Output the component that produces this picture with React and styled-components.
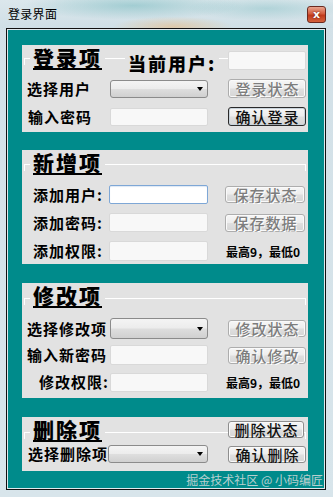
import React from "react";
import styled, { createGlobalStyle } from "styled-components";

const PANEL_BG = "#e2e2e2";
const TEAL = "#008b8b";

const Global = createGlobalStyle`
  html, body { margin: 0; padding: 0; }
  body {
    width: 333px; height: 497px; overflow: hidden;
    background: #d3e1e8;
    font-family: "Noto Sans CJK SC", "Noto Sans", sans-serif;
  }
  * { box-sizing: border-box; }
`;

const Window = styled.div`
  width: 333px;
  height: 497px;
  display: flex;
  flex-direction: column;
  background: linear-gradient(180deg, #d2e0e7 0%, #d8e5eb 100%);
`;

const TitleBar = styled.div`
  height: 28px;
  flex: none;
  display: flex;
  align-items: flex-start;
  justify-content: space-between;
  padding: 6px 7px 0 8px;
  background:
    radial-gradient(ellipse 60px 10px at 52% 95%, rgba(240, 175, 100, 0.45), rgba(240, 175, 100, 0) 100%),
    radial-gradient(ellipse 110px 14px at 40% 20%, rgba(60, 160, 165, 0.35), rgba(60, 160, 165, 0) 100%),
    radial-gradient(ellipse 80px 12px at 80% 30%, rgba(60, 160, 165, 0.25), rgba(60, 160, 165, 0) 100%),
    linear-gradient(180deg, #dce7ec 0%, #cfdfe6 100%);
`;

const TitleText = styled.span`
  font-size: 12px;
  line-height: 16px;
  letter-spacing: 0.3px;
  color: #000;
`;

const CloseBtn = styled.div`
  width: 19px;
  height: 17px;
  border-radius: 3px;
  border: 1px solid #6b2a20;
  background: linear-gradient(180deg, #e9a58f 0%, #d35c3d 45%, #c03a1c 55%, #d4623c 100%);
  display: flex;
  align-items: center;
  justify-content: center;
  color: #fff;
  font-family: "DejaVu Sans", sans-serif;
  font-weight: bold;
  font-size: 11px;
  line-height: 1;
  text-shadow: 0 0 2px #5a1a10;
`;

const Body = styled.div`
  flex: 1;
  margin: 0 7px 7px 6px;
  border: 1px solid #111;
  box-shadow: inset 0 0 0 1px #dfe9ed;
  background: ${TEAL};
  padding: 16px 17px 0 15px;
  display: flex;
  flex-direction: column;
`;

const Panel = styled.div`
  background: ${PANEL_BG};
  display: flex;
  flex-direction: column;
  gap: ${(p) => p.$gap}px;
  margin-top: ${(p) => p.$mt || 0}px;
  padding-bottom: ${(p) => p.$pb}px;
`;

const Header = styled.div`
  position: relative;
  height: 28px;
  flex: none;
  display: flex;
  align-items: flex-start;
  padding: 0 2px 0 11px;
  margin-bottom: ${(p) => p.$mb - p.$gap}px;
  &::before {
    content: "";
    position: absolute;
    left: 2px;
    right: 2px;
    top: ${(p) => p.$line}px;
    height: 6px;
    border: 1px solid #fff;
    border-bottom: none;
  }
`;

const Heading = styled.span`
  position: relative;
  z-index: 1;
  margin-top: 1px;
  font-size: 21px;
  font-weight: 900;
  line-height: 22px;
  letter-spacing: 2px;
  color: #000;
  border-bottom: 2px solid #000;
  background: ${PANEL_BG};
  box-shadow: -3px 0 0 ${PANEL_BG}, 3px 0 0 ${PANEL_BG};
`;

const SubTitle = styled.span`
  position: relative;
  z-index: 1;
  margin: 7px 0 0 26px;
  font-size: 18px;
  font-weight: 900;
  line-height: 22px;
  letter-spacing: 2px;
  color: #000;
  background: ${PANEL_BG};
  box-shadow: -3px 0 0 ${PANEL_BG}, 3px 0 0 ${PANEL_BG};
`;

const HeaderSlot = styled.div`
  position: relative;
  z-index: 1;
  margin-left: auto;
  margin-top: ${(p) => p.$top}px;
  width: 78px;
  display: flex;
`;

const Row = styled.div`
  display: grid;
  grid-template-columns: ${(p) => p.$label}px ${(p) => p.$input}px 1fr;
  align-items: center;
  height: ${(p) => p.$h}px;
`;

const Label = styled.span`
  padding-left: ${(p) => p.$pl}px;
  font-size: 15px;
  font-weight: 600;
  letter-spacing: 1px;
  line-height: 18px;
  white-space: nowrap;
  color: #000;
`;

const TextBox = styled.div`
  height: ${(p) => p.$h || 19}px;
  border-radius: 2px;
  border: 1px solid ${(p) => (p.$focus ? "#7ea7d6" : "#d9d9d9")};
  background: ${(p) => (p.$focus ? "#fff" : "#f8f8f8")};
  box-shadow: ${(p) => (p.$focus ? "inset 0 1px 1px rgba(120,160,210,0.25)" : "none")};
`;

const Combo = styled.div`
  height: ${(p) => p.$h || 18}px;
  border-radius: 3px;
  border: 1px solid #8b8b8b;
  background: linear-gradient(180deg, #f4f4f4 0%, #ececec 48%, #dedede 52%, #d0d0d0 100%);
  display: flex;
  align-items: center;
  justify-content: flex-end;
  padding-right: 4px;
`;

const Arrow = styled.span`
  width: 0;
  height: 0;
  border-left: 3px solid transparent;
  border-right: 3px solid transparent;
  border-top: 4px solid #000;
`;

const Button = styled.div`
  justify-self: end;
  height: ${(p) => p.$h || 17}px;
  width: ${(p) => p.$w || 78}px;
  margin-right: ${(p) => p.$mr ?? 2}px;
  border-radius: 3px;
  border: 1px solid ${(p) => (p.$default ? "#2a2a2a" : p.$disabled ? "#adadad" : "#8e8e8e")};
  box-shadow: ${(p) => (p.$default ? "inset 0 0 0 1px #c8d2da" : "inset 0 0 0 1px #fafafa")};
  background: linear-gradient(180deg, #f6f6f6 0%, #ededed 48%, #dfdfdf 52%, #d6d6d6 100%);
  display: flex;
  align-items: center;
  justify-content: center;
  font-size: 15px;
  font-weight: 500;
  letter-spacing: 1px;
  padding-left: 1px;
  line-height: 1;
  white-space: nowrap;
  color: ${(p) => (p.$disabled ? "#7d7d7d" : "#111")};
  text-shadow: ${(p) => (p.$disabled ? "1px 1px 0 #fff" : "none")};
`;

const Hint = styled.span`
  justify-self: start;
  margin-left: ${(p) => p.$ml || 0}px;
  font-size: 12px;
  font-weight: 700;
  white-space: nowrap;
  color: #000;
`;

const Footer = styled.div`
  height: 17px;
  margin-right: -15px;
  display: flex;
  align-items: center;
  justify-content: flex-end;
  font-size: 12px;
  color: #b7cfcf;
  white-space: nowrap;
`;

export default function App() {
  return (
    <>
      <Global />
      <Window>
        <TitleBar>
          <TitleText>登录界面</TitleText>
          <CloseBtn>x</CloseBtn>
        </TitleBar>
        <Body>
          <Panel $gap={9} $pb={6}>
            <Header $line={13} $mb={6} $gap={9}>
              <Heading>登录项</Heading>
              <SubTitle>当前用户:</SubTitle>
              <HeaderSlot $top={6}>
                <TextBox style={{ width: "100%" }} />
              </HeaderSlot>
            </Header>
            <Row $label={88} $input={98} $h={19}>
              <Label $pl={5}>选择用户</Label>
              <Combo><Arrow /></Combo>
              <Button $disabled $h={19}>登录状态</Button>
            </Row>
            <Row $label={88} $input={98} $h={19}>
              <Label $pl={6}>输入密码</Label>
              <TextBox $h={18} />
              <Button $default $h={19}>确认登录</Button>
            </Row>
          </Panel>

          <Panel $gap={9} $pb={4} $mt={18}>
            <Header $line={14} $mb={7} $gap={9}>
              <Heading>新增项</Heading>
            </Header>
            <Row $label={87} $input={99} $h={19}>
              <Label $pl={11}>添加用户:</Label>
              <TextBox $focus />
              <Button $disabled $w={80} $mr={3}>保存状态</Button>
            </Row>
            <Row $label={87} $input={99} $h={19}>
              <Label $pl={11}>添加密码:</Label>
              <TextBox />
              <Button $disabled $w={80} $mr={3} $h={18}>保存数据</Button>
            </Row>
            <Row $label={87} $input={99} $h={19}>
              <Label $pl={11}>添加权限:</Label>
              <TextBox $h={20} />
              <Hint $ml={18}>最高9，最低0</Hint>
            </Row>
          </Panel>

          <Panel $gap={7} $pb={6} $mt={19}>
            <Header $line={15} $mb={7} $gap={7}>
              <Heading>修改项</Heading>
            </Header>
            <Row $label={88} $input={98} $h={20}>
              <Label $pl={5}>选择修改项</Label>
              <Combo $h={21}><Arrow /></Combo>
              <Button $disabled>修改状态</Button>
            </Row>
            <Row $label={88} $input={98} $h={20}>
              <Label $pl={5}>输入新密码</Label>
              <TextBox $h={20} />
              <Button $disabled>确认修改</Button>
            </Row>
            <Row $label={88} $input={98} $h={20}>
              <Label $pl={17}>修改权限:</Label>
              <TextBox />
              <Hint $ml={18}>最高9，最低0</Hint>
            </Row>
          </Panel>

          <Panel $gap={0} $pb={8} $mt={19}>
            <Header $line={15} $mb={0} $gap={0}>
              <Heading>删除项</Heading>
              <HeaderSlot $top={4}>
                <Button>删除状态</Button>
              </HeaderSlot>
            </Header>
            <Row $label={86} $input={100} $h={18}>
              <Label $pl={6}>选择删除项</Label>
              <Combo><Arrow /></Combo>
              <Button>确认删除</Button>
            </Row>
          </Panel>
          <Footer>掘金技术社区 @ 小码编匠</Footer>
        </Body>
      </Window>
    </>
  );
}
